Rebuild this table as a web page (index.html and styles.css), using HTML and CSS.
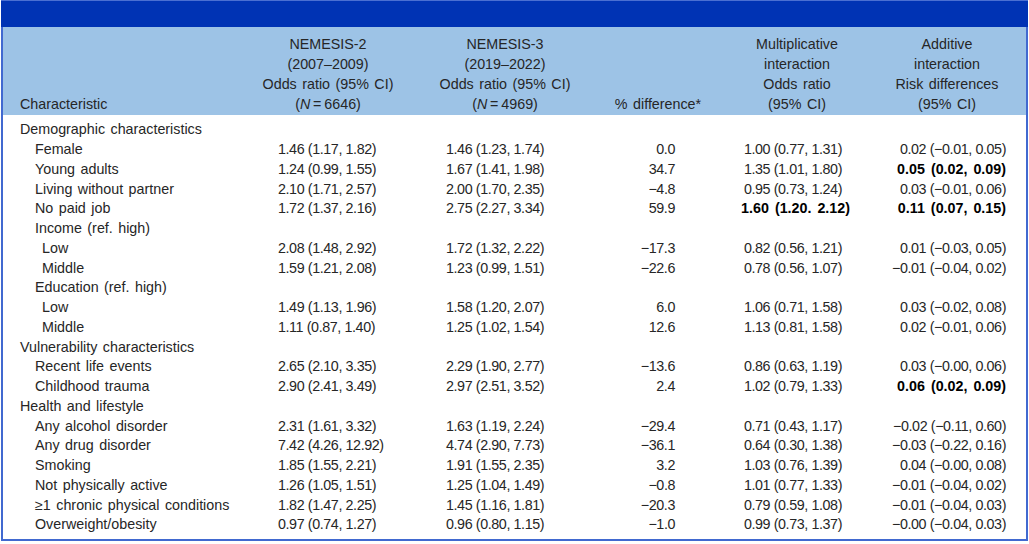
FILE: index.html
```html
<!DOCTYPE html>
<html lang="en">
<head>
<meta charset="utf-8">
<title>NEMESIS odds ratios</title>
<link rel="stylesheet" href="styles.css">
</head>
<body>
<div class="frame">
  <div class="bar"></div>
  <div class="box">
    <table class="tbl">
      <colgroup>
        <col class="c1"><col class="c2"><col class="c3"><col class="c4"><col class="c5"><col class="c6">
      </colgroup>
      <thead>
        <tr class="head">
          <th class="h-char">Characteristic</th>
          <th class="h-mid">NEMESIS-2<br>(2007–2009)<br>Odds ratio (95% CI)<br>(<i>N</i>&#8201;=&#8201;6646)</th>
          <th class="h-mid">NEMESIS-3<br>(2019–2022)<br>Odds ratio (95% CI)<br>(<i>N</i>&#8201;=&#8201;4969)</th>
          <th class="h-mid">% difference*</th>
          <th class="h-mid">Multiplicative<br>interaction<br>Odds ratio<br>(95% CI)</th>
          <th class="h-mid h-last">Additive<br>interaction<br>Risk differences<br>(95% CI)</th>
        </tr>
      </thead>
      <tbody>
        <tr class="first"><td class="l1">Demographic characteristics</td><td></td><td></td><td></td><td></td><td></td></tr>
        <tr><td class="l2">Female</td><td class="n2">1.46 (1.17, 1.82)</td><td class="n3">1.46 (1.23, 1.74)</td><td class="n4">0.0</td><td class="n5">1.00 (0.77, 1.31)</td><td class="n6">0.02 (−0.01, 0.05)</td></tr>
        <tr><td class="l2">Young adults</td><td class="n2">1.24 (0.99, 1.55)</td><td class="n3">1.67 (1.41, 1.98)</td><td class="n4">34.7</td><td class="n5">1.35 (1.01, 1.80)</td><td class="n6 b">0.05 (0.02, 0.09)</td></tr>
        <tr><td class="l2">Living without partner</td><td class="n2">2.10 (1.71, 2.57)</td><td class="n3">2.00 (1.70, 2.35)</td><td class="n4">−4.8</td><td class="n5">0.95 (0.73, 1.24)</td><td class="n6">0.03 (−0.01, 0.06)</td></tr>
        <tr><td class="l2">No paid job</td><td class="n2">1.72 (1.37, 2.16)</td><td class="n3">2.75 (2.27, 3.34)</td><td class="n4">59.9</td><td class="n5 b b5">1.60 (1.20. 2.12)</td><td class="n6 b">0.11 (0.07, 0.15)</td></tr>
        <tr><td class="l2">Income (ref. high)</td><td></td><td></td><td></td><td></td><td></td></tr>
        <tr><td class="l3">Low</td><td class="n2">2.08 (1.48, 2.92)</td><td class="n3">1.72 (1.32, 2.22)</td><td class="n4">−17.3</td><td class="n5">0.82 (0.56, 1.21)</td><td class="n6">0.01 (−0.03, 0.05)</td></tr>
        <tr><td class="l3">Middle</td><td class="n2">1.59 (1.21, 2.08)</td><td class="n3">1.23 (0.99, 1.51)</td><td class="n4">−22.6</td><td class="n5">0.78 (0.56, 1.07)</td><td class="n6">−0.01 (−0.04, 0.02)</td></tr>
        <tr><td class="l2">Education (ref. high)</td><td></td><td></td><td></td><td></td><td></td></tr>
        <tr><td class="l3">Low</td><td class="n2">1.49 (1.13, 1.96)</td><td class="n3">1.58 (1.20, 2.07)</td><td class="n4">6.0</td><td class="n5">1.06 (0.71, 1.58)</td><td class="n6">0.03 (−0.02, 0.08)</td></tr>
        <tr><td class="l3">Middle</td><td class="n2">1.11 (0.87, 1.40)</td><td class="n3">1.25 (1.02, 1.54)</td><td class="n4">12.6</td><td class="n5">1.13 (0.81, 1.58)</td><td class="n6">0.02 (−0.01, 0.06)</td></tr>
        <tr><td class="l1">Vulnerability characteristics</td><td></td><td></td><td></td><td></td><td></td></tr>
        <tr><td class="l2">Recent life events</td><td class="n2">2.65 (2.10, 3.35)</td><td class="n3">2.29 (1.90, 2.77)</td><td class="n4">−13.6</td><td class="n5">0.86 (0.63, 1.19)</td><td class="n6">0.03 (−0.00, 0.06)</td></tr>
        <tr><td class="l2">Childhood trauma</td><td class="n2">2.90 (2.41, 3.49)</td><td class="n3">2.97 (2.51, 3.52)</td><td class="n4">2.4</td><td class="n5">1.02 (0.79, 1.33)</td><td class="n6 b">0.06 (0.02, 0.09)</td></tr>
        <tr><td class="l1">Health and lifestyle</td><td></td><td></td><td></td><td></td><td></td></tr>
        <tr><td class="l2">Any alcohol disorder</td><td class="n2">2.31 (1.61, 3.32)</td><td class="n3">1.63 (1.19, 2.24)</td><td class="n4">−29.4</td><td class="n5">0.71 (0.43, 1.17)</td><td class="n6">−0.02 (−0.11, 0.60)</td></tr>
        <tr><td class="l2">Any drug disorder</td><td class="n2">7.42 (4.26, 12.92)</td><td class="n3">4.74 (2.90, 7.73)</td><td class="n4">−36.1</td><td class="n5">0.64 (0.30, 1.38)</td><td class="n6">−0.03 (−0.22, 0.16)</td></tr>
        <tr><td class="l2">Smoking</td><td class="n2">1.85 (1.55, 2.21)</td><td class="n3">1.91 (1.55, 2.35)</td><td class="n4">3.2</td><td class="n5">1.03 (0.76, 1.39)</td><td class="n6">0.04 (−0.00, 0.08)</td></tr>
        <tr><td class="l2">Not physically active</td><td class="n2">1.26 (1.05, 1.51)</td><td class="n3">1.25 (1.04, 1.49)</td><td class="n4">−0.8</td><td class="n5">1.01 (0.77, 1.33)</td><td class="n6">−0.01 (−0.04, 0.02)</td></tr>
        <tr><td class="l2">≥1 chronic physical conditions</td><td class="n2">1.82 (1.47, 2.25)</td><td class="n3">1.45 (1.16, 1.81)</td><td class="n4">−20.3</td><td class="n5">0.79 (0.59, 1.08)</td><td class="n6">−0.01 (−0.04, 0.03)</td></tr>
        <tr class="last"><td class="l2">Overweight/obesity</td><td class="n2">0.97 (0.74, 1.27)</td><td class="n3">0.96 (0.80, 1.15)</td><td class="n4">−1.0</td><td class="n5">0.99 (0.73, 1.37)</td><td class="n6">−0.00 (−0.04, 0.03)</td></tr>
      </tbody>
    </table>
  </div>
</div>
</body>
</html>
```
FILE: styles.css
```css
html, body {
  margin: 0;
  padding: 0;
  background: #ffffff;
}

body {
  font-family: "Liberation Sans", Arial, sans-serif;
  font-size: 14.3px;
  color: #262626;
}

.frame {
  width: 1027px;
  margin-left: 1px;
}

.bar {
  height: 26px;
  background: #0033b4;
  border-top: 1px solid #4a6fd2;
}

.box {
  border: 2px solid #4169d0;
  border-top: none;
  height: 512px;
}

.tbl {
  width: 1023px;
  table-layout: fixed;
  border-collapse: collapse;
  border-spacing: 0;
}

.c1 { width: 253px; }
.c2 { width: 144px; }
.c3 { width: 210px; }
.c4 { width: 96px; }
.c5 { width: 182px; }
.c6 { width: 138px; }

.head th {
  background: #9dc3e6;
  font-weight: normal;
  line-height: 20px;
  vertical-align: bottom;
  padding: 6.5px 0 1.5px 0;
  white-space: nowrap;
  word-spacing: 1.5px;
}

.head i {
  font-style: italic;
}

.h-char {
  text-align: left;
  padding-left: 17px !important;
}

.h-mid {
  text-align: center;
}

.h-last {
  padding-right: 20px !important;
}

.tbl td {
  padding: 0;
  line-height: 19.75px;
  height: 19.75px;
  white-space: nowrap;
  vertical-align: middle;
}

.first td {
  padding-top: 5.4px;
}

.last td {
  padding-bottom: 3px;
}

.l1 { padding-left: 17px !important; word-spacing: 1.5px; }
.l2 { padding-left: 32px !important; word-spacing: 1.5px; }
.l3 { padding-left: 39px !important; word-spacing: 1.5px; }

.n2, .n3, .n4, .n5, .n6 {
  letter-spacing: -0.4px;
}

.n2 { text-align: left; padding-left: 22px !important; }
.n3 { text-align: left; padding-left: 46px !important; }
.n4 { text-align: right; padding-right: 31px !important; }
.n5 { text-align: right; padding-right: 46px !important; }
.n6 { text-align: right; padding-right: 20px !important; }

.b {
  font-weight: bold;
  color: #000000;
  letter-spacing: 0;
  word-spacing: 2px;
}

.b5 {
  padding-right: 38px !important;
}
```
